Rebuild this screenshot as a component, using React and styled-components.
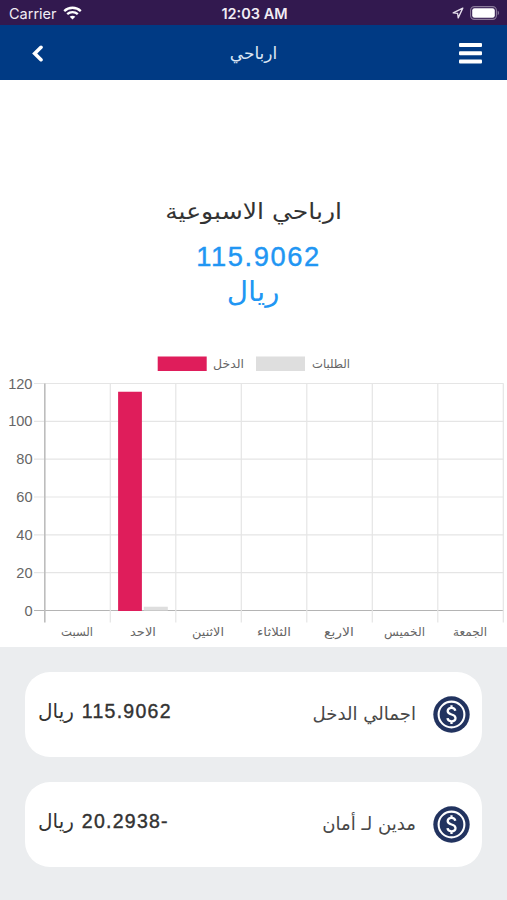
import React from 'react';
import styled, { createGlobalStyle } from 'styled-components';

const GlobalStyle = createGlobalStyle`
  * { box-sizing: border-box; }
  body {
    margin: 0;
    background: #fff;
    font-family: 'Liberation Sans', 'DejaVu Sans', sans-serif;
  }
`;

const Screen = styled.div`
  width: 507px;
  height: 900px;
  display: flex;
  flex-direction: column;
  overflow: hidden;
  background: #ebedef;
`;

const StatusBar = styled.div`
  height: 25px;
  display: grid;
  grid-template-columns: 1fr auto 1fr;
  align-items: center;
  padding: 2px 7px 0 9px;
  background: #32194f;
  color: #f1edf4;
  font-family: Inter, sans-serif;
  font-size: 14.5px;
  line-height: 20px;

  svg { margin-top: -1px; }
`;

const StatusSide = styled.div`
  display: flex;
  align-items: center;
  gap: 6px;
  justify-content: ${({ $end }) => ($end ? 'flex-end' : 'flex-start')};
`;

const Clock = styled.div`
  font-weight: 600;
`;

const NavBar = styled.header`
  height: 55px;
  display: grid;
  grid-template-columns: 1fr auto 1fr;
  align-items: center;
  padding: 1px 25px 0;
  background: #003a84;
  color: #fff;

  svg { display: block; }
  svg:first-child { margin-left: 7px; }
  svg:last-child { justify-self: end; }
`;

const NavTitle = styled.h1`
  margin: 0;
  font-family: 'DejaVu Sans', sans-serif;
  font-size: 17px;
  font-weight: 400;
  line-height: 30px;
  color: #dce6f3;
`;

const Summary = styled.section`
  height: 265px;
  padding-top: 115px;
  display: flex;
  flex-direction: column;
  align-items: center;
  background: #fff;
`;

const SummaryTitle = styled.h2`
  margin: 0;
  font-family: 'DejaVu Sans', sans-serif;
  font-size: 22px;
  font-weight: 400;
  line-height: 34px;
  color: #333;
  transform: scaleX(1.14);
`;

const Total = styled.div`
  margin-top: 10px;
  padding-left: 10px;
  font-size: 27.3px;
  line-height: 36px;
  letter-spacing: 1.6px;
  color: #2196f3;
  -webkit-text-stroke: 0.4px #2196f3;
`;

const Currency = styled.div`
  font-family: 'DejaVu Sans', sans-serif;
  font-size: 28px;
  line-height: 34px;
  color: #2196f3;
  transform: scaleX(1.05);
`;

const ChartSection = styled.section`
  height: 302px;
  background: #fff;
  svg { display: block; }
`;

const ChartText = styled.text`
  font-family: 'DejaVu Sans', sans-serif;
  font-size: 12px;
  fill: #666;
`;

const TickText = styled.text`
  font-family: 'Liberation Sans', sans-serif;
  font-size: 14.6px;
  fill: #666;
`;

const CardList = styled.section`
  display: flex;
  flex-direction: column;
  gap: 25px;
  padding: 25px 25px 0;
`;

const Card = styled.div`
  height: 85px;
  display: flex;
  align-items: center;
  padding: 0 12px 0 13px;
  border-radius: 25px;
  background: #fff;
`;

const Amount = styled.div`
  flex: 1;
  display: flex;
  justify-content: flex-end;
  align-items: baseline;
  gap: 8px;
  padding-bottom: 8px;
  line-height: 30px;
  color: #333;
`;

const Value = styled.span`
  font-size: 19.5px;
  letter-spacing: 1.25px;
  -webkit-text-stroke: 0.4px #333;
`;

const Unit = styled.span`
  font-family: 'DejaVu Sans', sans-serif;
  font-size: 20px;
`;

const CardLabel = styled.div`
  margin: -2px 17px 0 0;
  font-family: 'DejaVu Sans', sans-serif;
  font-size: 18.1px;
  line-height: 30px;
  color: #484848;
`;

const WifiIcon = () => (
  <svg width="19" height="14" viewBox="0 0 19 14" fill="none" stroke="#fff" strokeWidth="2.3">
    <path d="M1.2 5.1C5.8.6 13.2.6 17.8 5.1" />
    <path d="M4.2 8.2c3-2.9 7.6-2.9 10.6 0" />
    <path d="M9.5 13.6 6.7 10.8c1.6-1.5 4-1.5 5.6 0z" fill="#fff" stroke="none" />
  </svg>
);

const LocationIcon = () => (
  <svg width="12" height="12" viewBox="0 0 12 12" fill="none" stroke="#e6dfec" strokeWidth="1.3" strokeLinejoin="round">
    <path d="M10.8 1.1 1.2 5.9l4.4.5.6 4.5z" />
  </svg>
);

const BatteryIcon = () => (
  <svg width="30" height="14" viewBox="0 0 30 14">
    <rect x=".6" y=".6" width="25.8" height="12.8" rx="3.8" fill="none" stroke="#8b7b9b" strokeWidth="1.1" />
    <rect x="2.2" y="2.2" width="22.6" height="9.6" rx="2.3" fill="#fff" />
    <path d="M27.7 4.8c1.7.5 1.7 3.9 0 4.4z" fill="#8b7b9b" />
  </svg>
);

const BackIcon = () => (
  <svg width="11" height="17" viewBox="0 0 11 17" fill="none" stroke="#fff" strokeWidth="3.6" strokeLinecap="round">
    <path d="M9 2.3 2.7 8.5 9 14.7" />
  </svg>
);

const MenuIcon = () => (
  <svg width="23" height="21" viewBox="0 0 23 21" fill="#fff">
    <rect width="23" height="4" rx="1" />
    <rect y="8.3" width="23" height="4" rx="1" />
    <rect y="16.5" width="23" height="4" rx="1" />
  </svg>
);

const CoinIcon = () => (
  <svg width="37" height="37" viewBox="0 0 37 37" fill="none" stroke="#fff">
    <circle cx="18.5" cy="18.5" r="18.2" fill="#22335f" stroke="none" />
    <circle cx="18.5" cy="18.5" r="12.9" strokeWidth="2.1" />
    <path
      d="M22.3 14.8c-.3-1.9-1.7-2.9-3.8-2.9-2.2 0-3.8 1.2-3.8 3.2 0 4.5 7.8 2.3 7.8 6.9 0 2-1.7 3.3-4 3.3s-3.8-1.2-4-3.1M18.5 9.2v2.8M18.5 25v2.9"
      strokeWidth="2.3"
    />
  </svg>
);

const LEFT = 44.8;
const COL = 65.5;
const BASE = 265.5;
const UNIT = 227 / 120;

// x and w are the label's left edge and width
const days = [
  { name: 'السبت', income: 0, orders: 0, x: 61, w: 32 },
  { name: 'الاحد', income: 115.9062, orders: 2, x: 130, w: 26 },
  { name: 'الاثنين', income: 0, orders: 0, x: 192, w: 32 },
  { name: 'الثلاثاء', income: 0, orders: 0, x: 257, w: 34 },
  { name: 'الاربع', income: 0, orders: 0, x: 324, w: 30 },
  { name: 'الخميس', income: 0, orders: 0, x: 384, w: 41 },
  { name: 'الجمعة', income: 0, orders: 0, x: 453, w: 34 },
];

const Label = ({ x, y, w, children }) => (
  <ChartText x={x} y={y} textLength={w} lengthAdjust="spacingAndGlyphs">
    {children}
  </ChartText>
);

const EarningsChart = () => (
  <svg width="507" height="302" viewBox="0 0 507 302">
    <rect x="157.7" y="11.5" width="49" height="14.5" fill="#df1d5b" />
    <Label x={213} y={23} w={31}>الدخل</Label>
    <rect x="256" y="11.5" width="49" height="14.5" fill="#dedede" />
    <Label x={312} y={23} w={38}>الطلبات</Label>

    {[0, 20, 40, 60, 80, 100, 120].map((value) => {
      const y = BASE - value * UNIT;
      return (
        <g key={value}>
          <line x1="34" x2="503.5" y1={y} y2={y} stroke={value ? '#e5e5e5' : '#b4b4b4'} strokeWidth="1.2" />
          <TickText x="32.5" y={y + 5} textAnchor="end">{value}</TickText>
        </g>
      );
    })}

    {[0, 1, 2, 3, 4, 5, 6, 7].map((i) => (
      <line
        key={i}
        x1={LEFT + i * COL}
        x2={LEFT + i * COL}
        y1={BASE - 120 * UNIT}
        y2="277.5"
        stroke={i ? '#e5e5e5' : '#bdbdbd'}
        strokeWidth={i ? 1.2 : 1.6}
      />
    ))}

    {days.map((day, i) => (
      <g key={day.name}>
        <rect x={LEFT + i * COL + 7.8} y={BASE + 0.5 - day.income * UNIT} width="23.8" height={day.income * UNIT} fill="#df1d5b" />
        <rect x={LEFT + i * COL + 33.5} y={BASE - day.orders * UNIT} width="24" height={day.orders * UNIT} fill="#dedede" />
        <Label x={day.x} y={291} w={day.w}>{day.name}</Label>
      </g>
    ))}
  </svg>
);

const BalanceCard = ({ amount, label }) => (
  <Card>
    <Amount dir="rtl">
      <Value>{amount}</Value>
      <Unit>ريال</Unit>
    </Amount>
    <CardLabel dir="rtl">{label}</CardLabel>
    <CoinIcon />
  </Card>
);

const App = () => (
  <>
    <GlobalStyle />
    <Screen>
      <StatusBar>
        <StatusSide>
          Carrier
          <WifiIcon />
        </StatusSide>
        <Clock>12:03 AM</Clock>
        <StatusSide $end>
          <LocationIcon />
          <BatteryIcon />
        </StatusSide>
      </StatusBar>

      <NavBar>
        <BackIcon />
        <NavTitle dir="rtl">ارباحي</NavTitle>
        <MenuIcon />
      </NavBar>

      <Summary>
        <SummaryTitle dir="rtl">ارباحي الاسبوعية</SummaryTitle>
        <Total>115.9062</Total>
        <Currency dir="rtl">ريال</Currency>
      </Summary>

      <ChartSection>
        <EarningsChart />
      </ChartSection>

      <CardList>
        <BalanceCard amount="115.9062" label="اجمالي الدخل" />
        <BalanceCard amount="-20.2938" label="مدين لـ أمان" />
      </CardList>
    </Screen>
  </>
);

export default App;
